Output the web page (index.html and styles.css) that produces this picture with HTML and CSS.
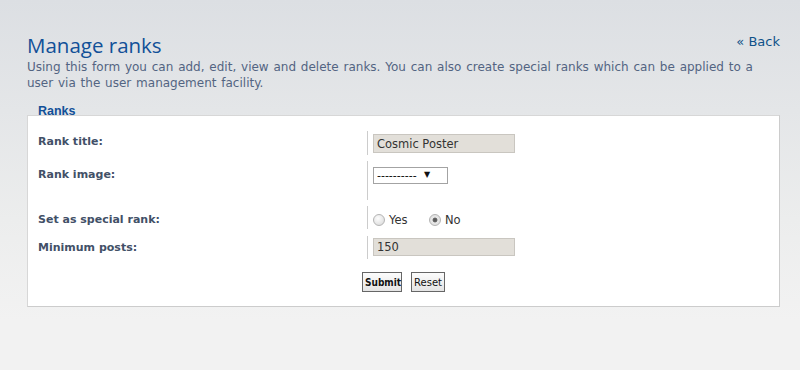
FILE: index.html
```html
<!DOCTYPE html>
<html lang="en">
<head>
    <meta charset="UTF-8">
    <title>Manage ranks</title>
    <link rel="stylesheet" href="styles.css">
</head>
<body>

<div id="page">
    <div class="header">
        <h1>Manage ranks</h1>
        <a class="back" href="#">&laquo; Back</a>
    </div>
    <p class="explain">Using this form you can add, edit, view and delete ranks. You can also create special ranks which can be applied to a user via the user management facility.</p>

    <div class="legend">Ranks</div>
    <form class="panel">
        <div class="row row1">
            <div class="dt"><label for="title">Rank title:</label></div>
            <div class="dd"><input class="text" id="title" type="text" value="Cosmic Poster"></div>
        </div>

        <div class="row row2">
            <div class="dt"><label for="image">Rank image:</label></div>
            <div class="dd">
                <span class="select"><select id="image"><option>----------</option></select></span>
            </div>
        </div>

        <div class="row row3">
            <div class="dt"><label>Set as special rank:</label></div>
            <div class="dd">
                <label class="radio"><input type="radio" name="special"> Yes</label>
                <label class="radio"><input type="radio" name="special" checked> No</label>
            </div>
        </div>

        <div class="row row4">
            <div class="dt"><label for="posts">Minimum posts:</label></div>
            <div class="dd"><input class="text small" id="posts" type="text" value="150"></div>
        </div>

        <div class="buttons">
            <button type="button" class="submit">Submit</button>
            <button type="button" class="reset">Reset</button>
        </div>
    </form>
</div>

</body>
</html>
```

FILE: styles.css
```css
html, body {
    margin: 0;
    height: 100%;
}
body {
    font-family: "DejaVu Sans", Verdana, sans-serif;
    font-size: 11px;
    color: #536482;
    background: linear-gradient(#dcdfe3 0, #eceded 220px, #f2f2f2 320px, #f2f2f2 100%);
}
#page {
    padding: 0 20px 0 27px;
}
.header {
    display: flex;
    justify-content: space-between;
    align-items: flex-start;
    padding-top: 33px;
}
h1 {
    margin: 0;
    font-family: "Open Sans", sans-serif;
    font-weight: normal;
    font-size: 20.5px;
    line-height: 24px;
    color: #115098;
}
.back {
    margin-top: 1px;
    font-size: 13px;
    line-height: 16px;
    color: #105289;
    text-decoration: none;
}
.explain {
    margin: 3px 0 0 0;
    font-size: 12px;
    line-height: 15.6px;
    word-spacing: 1px;
}
.legend {
    margin: 13px 0 0 11px;
    font-family: "Liberation Sans", Arial, sans-serif;
    font-size: 12.5px;
    font-weight: bold;
    line-height: 15px;
    color: #115098;
}
.panel {
    margin-top: -4px;
    padding: 15px 10px 14px 10px;
    background-color: #fff;
    border: 1px solid #ccc;
    border-top-color: #d7d7d7;
    border-left-color: #d7d7d7;
}
.row {
    display: flex;
    align-items: flex-start;
    margin-bottom: 6px;
}
.dt {
    width: 45%;
    flex: none;
}
.dt label {
    display: block;
    font-weight: bold;
    line-height: 14px;
    color: #425067;
}
.dd {
    border-left: 1px solid #ccc;
    padding-left: 5px;
}
.row1 .dt { padding-top: 4px; }
.row1 .dd { padding: 3px 0 2px 5px; }
.row2 .dt { padding-top: 7px; }
.row2 .dd { padding: 6px 0 16px 5px; }
.row3 { margin-bottom: 7px; }
.row3 .dt { padding-top: 7px; }
.row3 .dd { padding: 7px 0 0 5px; height: 16px; }
.row4 .dt { padding-top: 5px; }
.row4 .dd { padding: 2px 0 3px 5px; }

input.text {
    display: block;
    box-sizing: border-box;
    width: 142px;
    height: 19px;
    margin: 0;
    padding: 0 3px;
    font-family: "DejaVu Sans", Verdana, sans-serif;
    font-size: 11.5px;
    color: #333;
    background-color: #e2dfd9;
    border: 1px solid #c9c6c0;
}
input.small {
    height: 18px;
}
.select {
    position: relative;
    display: block;
    width: 75px;
}
.select select {
    display: block;
    box-sizing: border-box;
    width: 75px;
    height: 17px;
    margin: 0;
    padding: 0 0 0 3px;
    -webkit-appearance: none;
    appearance: none;
    font-family: "DejaVu Sans", Verdana, sans-serif;
    font-size: 11px;
    color: #000;
    background: #fff;
    border: 1px solid #a3a3a3;
    border-radius: 0;
}
.select::after {
    content: "\25BC";
    position: absolute;
    left: 51px;
    top: 3px;
    font-size: 8px;
    line-height: 10px;
    color: #111;
    pointer-events: none;
}
.radio {
    display: inline-flex;
    align-items: center;
    line-height: 14px;
    font-size: 11.5px;
    color: #333;
    margin-right: 18px;
}
.radio input {
    -webkit-appearance: none;
    appearance: none;
    box-sizing: border-box;
    width: 12px;
    height: 12px;
    margin: 0 4px 0 0;
    border: 1px solid #b4b4b4;
    border-radius: 50%;
    background: radial-gradient(circle at 40% 35%, #fdfdfd 0, #e6e6e6 60%, #d4d4d4 100%);
}
.radio input:checked {
    background: radial-gradient(circle, #555 0, #666 2px, #e8e8e8 2.8px, #dcdcdc 100%);
}
.buttons {
    display: flex;
    justify-content: center;
    gap: 9px;
    margin-top: 13px;
}
.buttons button {
    box-sizing: border-box;
    height: 20px;
    padding: 0 2px;
    font-family: "DejaVu Sans", Verdana, sans-serif;
    font-size: 10px;
    color: #111;
    background: linear-gradient(#fcfcfc, #e4e4e4);
    border: 1px solid #666;
    border-radius: 0;
}
.buttons .submit {
    font-family: "DejaVu Sans Condensed", "DejaVu Sans", sans-serif;
    font-weight: bold;
    width: 40px;
}
.buttons .reset {
    width: 34px;
}
```
